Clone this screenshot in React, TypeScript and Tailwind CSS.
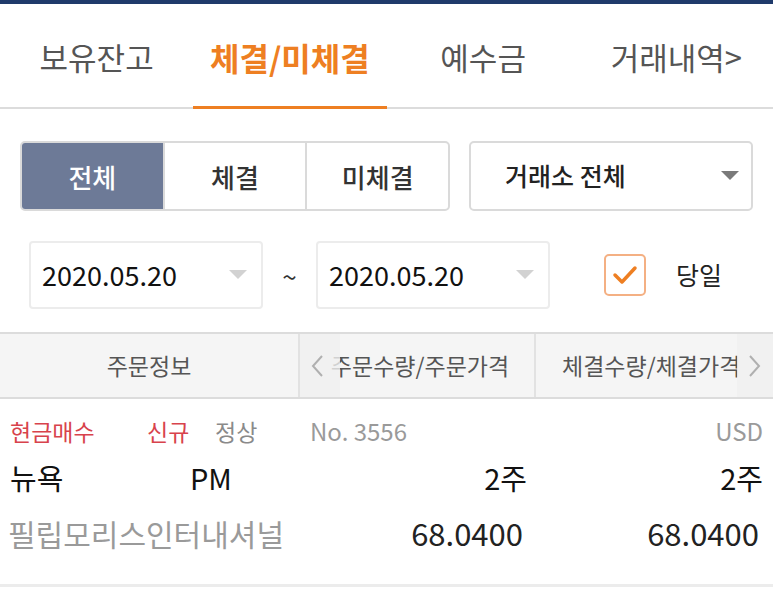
import React from "react";

const font = { fontFamily: '"Noto Sans CJK KR", "Noto Sans", sans-serif' };

const tabs = ["보유잔고", "체결/미체결", "예수금", "거래내역>"];
const segments = ["전체", "체결", "미체결"];

const Caret = ({ className }: { className: string }) => (
  <svg className={className} width="18" height="10" viewBox="0 0 18 10">
    <path d="M0 0 L18 0 L9 9 Z" fill="currentColor" />
  </svg>
);

const App = () => {
  return (
    <div className="w-[773px] h-[595px] bg-white overflow-hidden text-[#222]" style={font}>
      <div className="h-[4px] bg-[#1f3a6b]" />

      {/* Tabs */}
      <div className="grid grid-cols-4 h-[105px] border-b-2 border-[#dcdcdc]">
        {tabs.map((t, i) => (
          <div
            key={t}
            className={
              i === 1
                ? "flex items-center justify-center text-[32px] font-bold text-[#ee7f22] border-b-[3px] border-[#ee7f22] -mb-[2px] pt-[4px]"
                : "flex items-center justify-center text-[31px] text-[#555] pt-[4px]"
            }
          >
            {t}
          </div>
        ))}
      </div>

      {/* Filter row */}
      <div className="flex gap-[19px] px-[20px] pt-[32px]">
        <div className="flex w-[430px] h-[70px] rounded-[5px] border-2 border-[#dadada] overflow-hidden">
          {segments.map((s, i) => (
            <div
              key={s}
              className={
                i === 0
                  ? "flex-1 flex items-center justify-center bg-[#6d7a97] text-white text-[26px] font-medium"
                  : "flex-1 flex items-center justify-center text-[26px] font-medium text-[#333] border-l-2 border-[#dadada]"
              }
            >
              {s}
            </div>
          ))}
        </div>
        <div className="flex items-center justify-between w-[284px] h-[70px] rounded-[5px] border-2 border-[#dadada] pl-[34px] pr-[12px]">
          <span className="text-[25px] font-medium text-[#222]">거래소 전체</span>
          <Caret className="text-[#7a7a7a]" />
        </div>
      </div>

      {/* Date row */}
      <div className="flex items-center pl-[29px] pt-[30px] h-[98px]">
        <div className="flex items-center justify-between w-[234px] h-[68px] rounded-[4px] border-2 border-[#ececec] pl-[11px] pr-[14px]">
          <span className="text-[27px] text-[#111]">2020.05.20</span>
          <Caret className="text-[#d2d2d2]" />
        </div>
        <span className="w-[53px] text-center text-[26px] text-[#333]">~</span>
        <div className="flex items-center justify-between w-[234px] h-[68px] rounded-[4px] border-2 border-[#ececec] pl-[11px] pr-[14px]">
          <span className="text-[27px] text-[#111]">2020.05.20</span>
          <Caret className="text-[#d2d2d2]" />
        </div>
        <div className="ml-[54px] w-[42px] h-[42px] rounded-[5px] border-2 border-[#f4b083] flex items-center justify-center">
          <svg width="28" height="22" viewBox="0 0 28 22">
            <path d="M4 11 L11 18 L24 4" stroke="#ee7f22" strokeWidth="3.5" fill="none" strokeLinecap="round" strokeLinejoin="round" />
          </svg>
        </div>
        <span className="ml-[30px] text-[25px] text-[#222]">당일</span>
      </div>

      {/* Table header */}
      <div className="mt-[23px] grid grid-cols-[300px_236px_237px] h-[67px] bg-[#f5f5f5] border-y-2 border-[#dcdcdc] text-[23px] text-[#555]">
        <div className="flex items-center justify-center border-r-2 border-[#e2e2e2]">주문정보</div>
        <div className="relative flex items-center justify-center border-r-2 border-[#e2e2e2] overflow-hidden">
          <span className="pl-[6px] whitespace-nowrap">주문수량/주문가격</span>
          <div className="absolute left-0 top-0 bottom-0 w-[40px] bg-[#f0f0f0]/80 flex items-center pl-[10px]">
            <svg width="14" height="26" viewBox="0 0 14 26">
              <path d="M12 3 L3 13 L12 23" stroke="#b0b0b0" strokeWidth="2" fill="none" />
            </svg>
          </div>
        </div>
        <div className="relative flex items-center pl-[26px] overflow-hidden">
          <span className="whitespace-nowrap">체결수량/체결가격</span>
          <div className="absolute right-0 top-0 bottom-0 w-[36px] bg-[#f0f0f0]/85 flex items-center justify-center">
            <svg width="14" height="26" viewBox="0 0 14 26">
              <path d="M2 3 L11 13 L2 23" stroke="#b0b0b0" strokeWidth="2" fill="none" />
            </svg>
          </div>
        </div>
      </div>

      {/* Row */}
      <div className="h-[188px] border-b-[3px] border-[#ececec] pt-[14px]">
        <div className="grid grid-cols-[300px_236px_237px] h-[36px] items-center text-[23px]">
          <div className="flex pl-[10px]">
            <span className="text-[#d8434c] w-[137px]">현금매수</span>
            <span className="text-[#d8434c] w-[68px]">신규</span>
            <span className="text-[#8a8a8a]">정상</span>
          </div>
          <div className="pl-[10px] text-[24px] text-[#9a9a9a]">No. 3556</div>
          <div className="text-right pr-[10px] text-[24px] text-[#9a9a9a]">USD</div>
        </div>
        <div className="grid grid-cols-[300px_236px_237px] h-[58px] items-center text-[29px] text-[#111]">
          <div className="flex pl-[10px]">
            <span className="w-[180px]">뉴욕</span>
            <span>PM</span>
          </div>
          <div className="text-right pr-[9px]">2주</div>
          <div className="text-right pr-[10px]">2주</div>
        </div>
        <div className="grid grid-cols-[300px_236px_237px] h-[52px] items-center">
          <div className="pl-[8px] text-[30px] text-[#9a9a9a] whitespace-nowrap">필립모리스인터내셔널</div>
          <div className="text-right pr-[13px] text-[31px] text-[#222]">68.0400</div>
          <div className="text-right pr-[14px] text-[31px] text-[#222]">68.0400</div>
        </div>
      </div>
    </div>
  );
};

export default App;
